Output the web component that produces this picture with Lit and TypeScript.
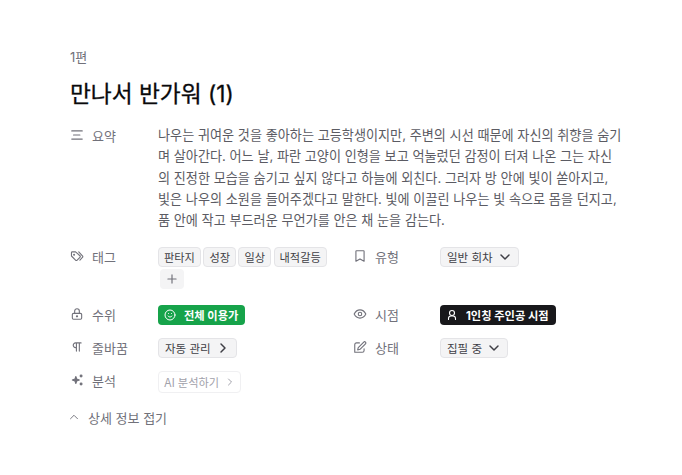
import { LitElement, html, css, svg } from "lit";
import { customElement } from "lit/decorators.js";

const icon = (body: unknown, size = 14, sw = 1.9) => html`<svg class="ic" width=${size} height=${size} viewBox="0 0 24 24" fill="none" stroke="currentColor" stroke-width=${sw} stroke-linecap="round" stroke-linejoin="round">${body}</svg>`;

const I = {
  text: svg`<path d="M3 5h18M6 12h11M3 19h18"/>`,
  tag: svg`<path d="M9.5 5H4a1.5 1.5 0 0 0-1.5 1.5V12l7 7a2 2 0 0 0 2.8 0l4.7-4.7a2 2 0 0 0 0-2.8z"/><path d="M15 5l6.3 6.7a2 2 0 0 1 0 2.8L17 19"/><circle cx="7" cy="10" r=".8"/>`,
  book: svg`<path d="M6 3h12a1 1 0 0 1 1 1v17l-7-4-7 4V4a1 1 0 0 1 1-1z"/>`,
  lock: svg`<rect x="4" y="11" width="16" height="10" rx="2"/><path d="M8 11V7a4 4 0 0 1 8 0v4"/><circle cx="12" cy="16" r="1"/>`,
  eye: svg`<path d="M2 12s3.6-7 10-7 10 7 10 7-3.6 7-10 7-10-7-10-7z"/><circle cx="12" cy="12" r="3"/>`,
  para: svg`<path d="M11 5v14M16 5v14M19 5H9.5a4 4 0 0 0 0 8H11"/>`,
  pen: svg`<path d="M11 5H6a3 3 0 0 0-3 3v13h13a3 3 0 0 0 3-3v-3"/><path d="M18.4 3.6a2.1 2.1 0 0 1 3 3L12 16l-4 1 1-4z"/>`,
  spark: svg`<path d="M10 6l1.6 4.4L16 12l-4.4 1.6L10 18l-1.6-4.4L4 12l4.4-1.6z" fill="currentColor"/><circle cx="19" cy="5" r="1.6" fill="currentColor"/><circle cx="19" cy="19" r="1.6" fill="currentColor"/>`,
  up: svg`<path d="M6 15l6-6 6 6"/>`,
  down: svg`<path d="M6 9l6 6 6-6"/>`,
  right: svg`<path d="M9 6l6 6-6 6"/>`,
  plus: svg`<path d="M12 5v14M5 12h14"/>`,
  smile: svg`<circle cx="12" cy="12" r="10"/><path d="M8 14s1.5 2 4 2 4-2 4-2M9 9h.01M15 9h.01"/>`,
  user: svg`<circle cx="12" cy="8" r="5"/><path d="M5 21v-2a5 5 0 0 1 5-5h4a5 5 0 0 1 5 5v2"/>`,
};

@customElement("app-root")
export class AppRoot extends LitElement {
  static styles = css`
    :host { display: block; width: 682px; height: 475px; background: #fff; box-sizing: border-box; padding: 48px 48px 0 70px; font-family: Inter, "Noto Sans CJK KR", sans-serif; color: #71717a; font-size: 13px; overflow: hidden; }
    .ic { display: block; flex: none; }
    .ep { font-size: 13px; line-height: 18px; font-weight: 400; }
    h1 { margin: 12px 0 0; font-size: 22.7px; line-height: 32px; font-weight: 400; color: #09090b; -webkit-text-stroke: 0.3px #09090b; }
    .summary { display: grid; grid-template-columns: 88px 464px; margin-top: 15px; }
    .label { display: flex; align-items: center; gap: 8px; height: 18px; font-size: 13px; }
    .label .ic { width: 14px; }
    .summary .label { height: 20px; }
    .summary p { margin: 0; font-size: 13.14px; line-height: 21.25px; color: #5b5b63; }
    .grid { display: grid; grid-template-columns: 283px 1fr; margin-top: 16px; row-gap: 12px; }
    .row { display: flex; align-items: flex-start; min-height: 21px; }
    .row .label { width: 88px; flex: none; }
    .r .label { width: 87px; gap: 8px; }
    .tags { display: flex; flex-wrap: wrap; gap: 2px 2.5px; width: 172px; margin-bottom: 4px; }
    .chip { display: inline-flex; align-items: center; gap: 4px; height: 20px; padding: 0 5px; border: 1px solid #e4e4e7; border-radius: 4px; background: #f4f4f5; color: #3f3f46; font-size: 11.2px; box-sizing: border-box; font-weight: 400; }
    .add { width: 24px; background: #f4f4f5; border: none; justify-content: center; padding: 0; color: #71717a; margin-left: 2px; }
    .badge { display: inline-flex; align-items: center; gap: 8px; height: 20px; padding: 0 7px 0 6px; border-radius: 4px; color: #fff; font-size: 11.25px; font-weight: 700; }
    .green { background: #16a34a; }
    .black { background: #18181b; }
    .sel { padding: 0 5px 0 6px; font-size: 11.5px; }
    .ai { background: #fff; color: #a1a1aa; border-color: #f0f0f2; height: 22px; font-weight: 400; padding: 0 4px 0 5px; gap: 5px; }
    .foot { display: flex; align-items: center; gap: 7px; margin-top: 15px; margin-left: -3px; height: 18px; font-size: 13px; }
  `;

  render() {
    return html`
      <div class="ep">1편</div>
      <h1>만나서 반가워 (1)</h1>
      <div class="summary">
        <div class="label">${icon(I.text)}<span>요약</span></div>
        <p>나우는 귀여운 것을 좋아하는 고등학생이지만, 주변의 시선 때문에 자신의 취향을 숨기며 살아간다. 어느 날, 파란 고양이 인형을 보고 억눌렀던 감정이 터져 나온 그는 자신의 진정한 모습을 숨기고 싶지 않다고 하늘에 외친다. 그러자 방 안에 빛이 쏟아지고, 빛은 나우의 소원을 들어주겠다고 말한다. 빛에 이끌린 나우는 빛 속으로 몸을 던지고, 품 안에 작고 부드러운 무언가를 안은 채 눈을 감는다.</p>
      </div>
      <div class="grid">
        <div class="row">
          <div class="label">${icon(I.tag)}<span>태그</span></div>
          <div class="tags">
            <span class="chip">판타지</span><span class="chip">성장</span><span class="chip">일상</span><span class="chip">내적갈등</span>
            <span class="chip add">${icon(I.plus, 14, 2)}</span>
          </div>
        </div>
        <div class="row r">
          <div class="label">${icon(I.book)}<span>유형</span></div>
          <span class="chip sel">일반 회차 ${icon(I.down, 16, 2.2)}</span>
        </div>
        <div class="row">
          <div class="label">${icon(I.lock)}<span>수위</span></div>
          <span class="badge green">${icon(I.smile, 12, 2)}전체 이용가</span>
        </div>
        <div class="row r">
          <div class="label">${icon(I.eye)}<span>시점</span></div>
          <span class="badge black">${icon(I.user, 12, 2.2)}1인칭 주인공 시점</span>
        </div>
        <div class="row">
          <div class="label">${icon(I.para)}<span>줄바꿈</span></div>
          <span class="chip sel">자동 관리 ${icon(I.right, 16, 2.2)}</span>
        </div>
        <div class="row r">
          <div class="label">${icon(I.pen)}<span>상태</span></div>
          <span class="chip sel">집필 중 ${icon(I.down, 16, 2.2)}</span>
        </div>
        <div class="row">
          <div class="label">${icon(I.spark)}<span>분석</span></div>
          <span class="chip ai">AI 분석하기 ${icon(I.right, 12, 2)}</span>
        </div>
      </div>
      <div class="foot">${icon(I.up, 14, 1.6)}<span>상세 정보 접기</span></div>
    `;
  }
}
